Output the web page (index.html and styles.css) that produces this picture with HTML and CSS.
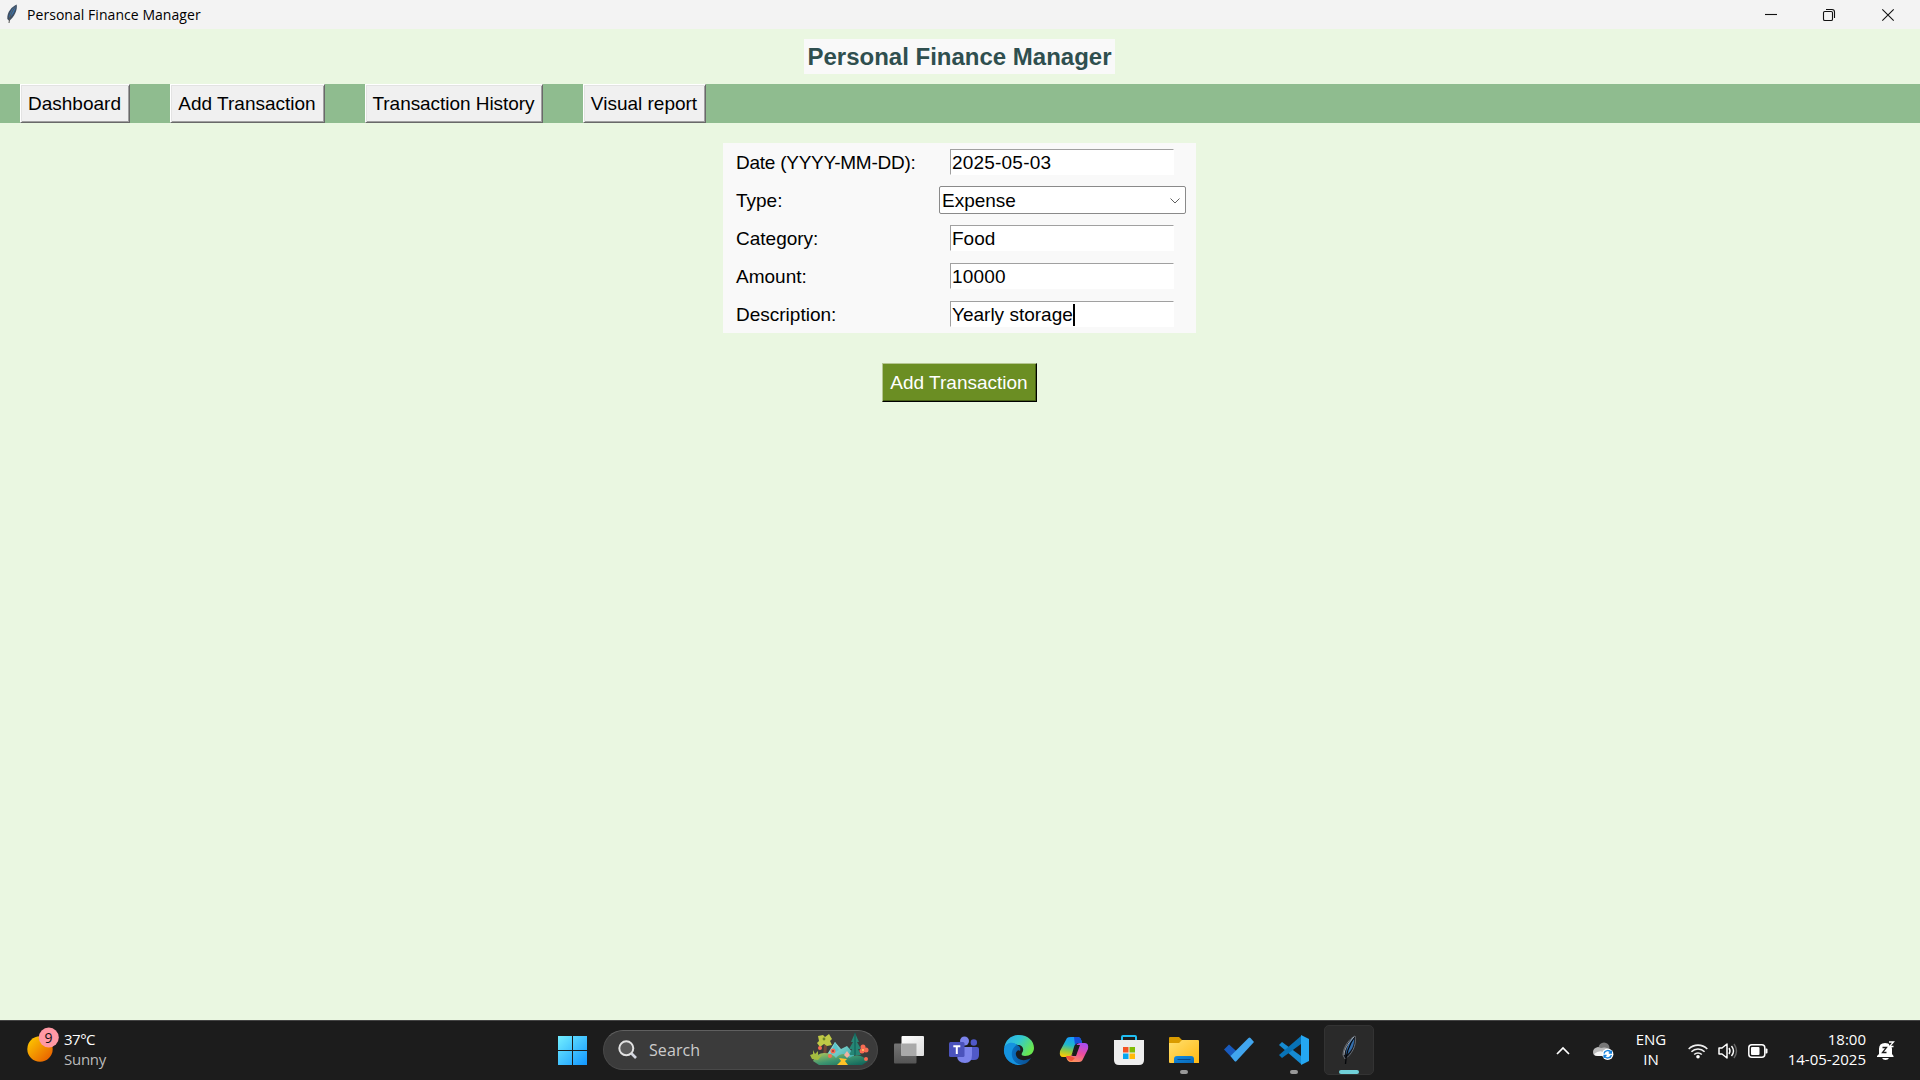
FILE: index.html
```html
<!DOCTYPE html>
<html lang="en">
<head>
<meta charset="utf-8">
<title>Personal Finance Manager</title>
<link rel="stylesheet" href="styles.css">
</head>
<body>
<header class="titlebar">
  <svg class="feather" width="12" height="20" viewBox="0 0 12 20"><path d="M10.6.5C6 2.500.8 8 1.300 15l2 2C8 13 12 6 10.600.5Z" fill="#3d4d62"/><path d="M9.800 2C6 4 3.500 9 3 14 7 11 9.500 6 9.800 2Z" fill="#3973ad"/><path d="M9.500 2.500C6 7 3.500 12 3 19" stroke="#555" fill="none"/></svg>
  <span class="window-title">Personal Finance Manager</span>
  <div class="window-controls">
    <svg width="12" height="12" viewBox="0 0 12 12"><path d="M1 5.500h12" /></svg>
    <svg width="12" height="12" viewBox="0 0 12 12"><rect x=".5" y="2.500" width="9" height="9" rx="1.300"/><path d="M3 .5h6q2.500 0 2.500 2.500v6"/></svg>
    <svg width="12" height="12" viewBox="0 0 12 12"><path d="M.3.3 11.700 11.700M11.700.3.3 11.700"/></svg>
  </div>
</header>
<main class="app">
  <h1 class="heading"><span>Personal Finance Manager</span></h1>
  <nav class="nav">
    <button class="tk-button dashboard">Dashboard</button>
    <button class="tk-button add">Add Transaction</button>
    <button class="tk-button history">Transaction History</button>
    <button class="tk-button report">Visual report</button>
  </nav>
  <form class="form">
    <label class="date-label">Date (YYYY-MM-DD):</label><div class="entry digits"><span>2025-05-03</span></div>
    <label>Type:</label><div class="combo"><span>Expense</span><svg width="10" height="6" viewBox="0 0 10 6"><path d="m.5.5 4.500 4.500L9.500.5"/></svg></div>
    <label>Category:</label><div class="entry"><span>Food</span></div>
    <label>Amount:</label><div class="entry digits"><span>10000</span></div>
    <label>Description:</label><div class="entry"><span>Yearly storage</span><i class="caret"></i></div>
  </form>
  <button class="tk-button add submit">Add Transaction</button>
</main>
<footer class="taskbar">
  <div class="weather">
    <svg width="34" height="36" viewBox="0 0 34 36"><defs><linearGradient id="sun" x1="0" y1="0" x2="1" y2="1"><stop stop-color="#ffd000"/><stop offset="1" stop-color="#e65500"/></linearGradient></defs><circle cx="13" cy="22" r="12.700" fill="url(#sun)"/><circle cx="21.800" cy="10.500" r="10" fill="#ff99a4"/><text x="21.500" y="15.500" text-anchor="middle" class="badge-text">9</text></svg>
    <div class="weather-text"><span class="temp">37°C</span><span class="muted">Sunny</span></div>
  </div>
  <div class="dock">
    <div class="slot"><svg width="30" height="30" viewBox="0 0 30 30"><defs><linearGradient id="win" x1="0" y1="0" x2="1" y2="1"><stop stop-color="#73efff"/><stop offset="1" stop-color="#1196ff"/></linearGradient></defs><path d="M0 1h14v14H0ZM15 1h14v14H15ZM0 16h14v14H0ZM15 16h14v14H15Z" fill="url(#win)"/></svg></div>
    <div class="search">
      <svg width="20" height="20" viewBox="0 0 20 20"><circle cx="8.300" cy="8.300" r="7" fill="#5a5a5a" stroke="#e2e2e2" stroke-width="2"/><path d="m13.500 13.500 4.500 4.500" stroke="#d2d5de" stroke-width="2.600"/></svg>
      <span>Search</span>
      <svg class="forest" width="60" height="34" viewBox="0 0 60 34">
        <defs><linearGradient id="hill" x1="0" y1="0" x2="1" y2="1"><stop stop-color="#b4c95b"/><stop offset=".5" stop-color="#3e9570"/><stop offset="1" stop-color="#096058"/></linearGradient><linearGradient id="mount" x1="0" y1="0" x2="1" y2="1"><stop stop-color="#a8ede5"/><stop offset="1" stop-color="#2b9fa0"/></linearGradient></defs>
        <path d="m16 23 9-14 6 7 6-3 7 8v10H18Z" fill="url(#mount)"/><path d="m20 22 5-13 4 8-5 3Z" fill="#5ac4cb"/>
        <path d="M14 12h3l-1 13h-3Z" fill="#744735"/>
        <path d="m8 3 5-1 2 2 4-3 3 5-2 2 2 4-5 1-3-2-4 3-3-4 2-2Z" fill="#c0ca46"/><circle cx="14" cy="6" r="1.400" fill="#688528"/>
        <path d="m45 0 4 9h-2l4 7h-3l3 6H39l3-6h-3l4-7h-2Z" fill="#268675"/><path d="M45 0v22" stroke="#0d5c57"/>
        <path d="M3 28q4-8 11-8 8 0 12 5 3-4 8-4 4 1 5 4 7-5 14-1l5 4-6 4H9Z" fill="url(#hill)"/>
        <path d="m29 25 8 1-2 2 3 4H27l4-4Z" fill="#ffc328"/>
        <path d="m3 17 2 4 3-3v5l4-1-4 5-6-1-2-4 3-1Z" fill="#a5bc40"/>
        <g fill="#f76c53"><circle cx="10" cy="15" r="2"/><circle cx="23" cy="18" r="2.500"/><circle cx="20" cy="23" r="2"/><circle cx="53" cy="14" r="2.500"/><circle cx="56" cy="17" r="2.500"/><circle cx="52" cy="18" r="2.500"/><circle cx="56" cy="26" r="2"/></g>
        <path d="m37 18 3 4-3 3-3-3Z" fill="#f1b2a1"/><circle cx="23" cy="18" r="1" fill="#9b3638"/><circle cx="53" cy="17" r="1" fill="#ffd164"/>
      </svg>
    </div>
    <div class="slot"><svg width="30" height="30" viewBox="0 0 30 30"><defs><linearGradient id="front" x2="1" y2="1"><stop stop-color="#fff"/><stop offset="1" stop-color="#ddd"/></linearGradient><linearGradient id="back" x2="0" y2="1"><stop stop-color="#747474"/><stop offset="1" stop-color="#555"/></linearGradient></defs><rect y="8.500" width="22.500" height="20" rx="1" fill="url(#back)"/><rect x="7.500" y="1" width="22.500" height="20" rx="1" fill="url(#front)"/><path d="M7.500 8.500h15V21h-15Z" fill="#aaa"/></svg></div>
    <div class="slot"><svg width="30" height="30" viewBox="0 0 30 30"><circle cx="15.500" cy="6" r="4.500" fill="#7b83eb"/><circle cx="24.800" cy="7.500" r="3.200" fill="#5059c9"/><path d="M20 12h8q2 0 2 2v6q0 5-5 5h-5Z" fill="#5059c9"/><path d="M9 12h14v8q0 8-7 8-8 0-8-8Z" fill="#7b83eb"/><rect y="7" width="15.500" height="15" rx="1.500" fill="#4b53bc"/><path d="M4.300 11.300h7M7.800 11v8" stroke="#fff" stroke-width="2"/></svg></div>
    <div class="slot"><svg width="30" height="30" viewBox="0 0 30 30"><defs><linearGradient id="edge-top" x2="1" y2=".5"><stop stop-color="#2baaf0"/><stop offset=".5" stop-color="#31c7d3"/><stop offset="1" stop-color="#69e650"/></linearGradient><linearGradient id="edge-low" x2="1"><stop stop-color="#087cd5"/><stop offset="1" stop-color="#0b4c8b"/></linearGradient></defs><path d="M0 14C1 5 7 0 15 0c9 0 15 6 15 13 0 5-4 8-9 8-3 0-4-1-3-3 3-4 0-8-4-8C7 8 1 9 0 14Z" fill="url(#edge-top)"/><path d="M0 14c1-5 7-7 13-4 3 1 4 4 3 6-2-2-5 1-4 4 1 5 8 7 15 3C24 28 20 30 15 30 7 30 0 24 0 14Z" fill="url(#edge-low)"/><path d="M13 10c-7 3-8 17 4 20C6 31-2 21 .3 13 2 8 9 6 13 10Z" fill="#1593df"/></svg></div>
    <div class="slot"><svg width="30" height="30" viewBox="0 0 30 30"><defs><linearGradient id="cop-a" x1=".5" x2=".3" y2="1"><stop stop-color="#169aff"/><stop offset=".4" stop-color="#20b7ca"/><stop offset=".7" stop-color="#90c943"/><stop offset="1" stop-color="#ffca05"/></linearGradient><linearGradient id="cop-b" x1=".7" x2=".3" y2="1"><stop stop-color="#a84cf2"/><stop offset=".5" stop-color="#ec4c9d"/><stop offset="1" stop-color="#ff9759"/></linearGradient></defs><path d="M8 3q1-1 4-1h7q3 0 4 6h-4q-3 0-4 4l-2 7q-1 3-4 3H4q-4 0-3-6Z" fill="url(#cop-a)"/><path d="M15 2h4q3 0 4 6h-4q-2 0-3 2Z" fill="#174fdc"/><path d="M21 8h5q4 0 3 6l-5 10q-1 3-4 3h-8q-4 0-5-6h3q4 0 5-4l2-6q1-3 4-3Z" fill="url(#cop-b)"/><path d="M7 21h4l5 2-3 3q-4 0-6-5Z" fill="#f35437"/><path d="M17 10h4l-4 11h-4Z" fill="#1c1c1c"/></svg></div>
    <div class="slot"><svg width="30" height="30" viewBox="0 0 30 30"><path d="M8 7V2q0-1 1-1h12q1 0 1 1v5" fill="none" stroke="#20bef2" stroke-width="2"/><path d="M0 5h30v20q0 5-5 5H5q-5 0-5-5Z" fill="#eee"/><path d="M9 12h5.500v5.500H9Z" fill="#f35325"/><path d="M15.500 12H21v5.500h-5.500Z" fill="#81bc06"/><path d="M9 18.500h5.500V24H9Z" fill="#05a6f0"/><path d="M15.500 18.500H21V24h-5.500Z" fill="#ffba08"/></svg></div>
    <div class="slot open"><svg width="30" height="30" viewBox="0 0 30 30"><defs><linearGradient id="folder" x2="1" y2="1"><stop stop-color="#ffe06f"/><stop offset="1" stop-color="#ffb812"/></linearGradient><linearGradient id="label" y2="1"><stop stop-color="#138be0"/><stop offset="1" stop-color="#0868b7"/></linearGradient></defs><path d="M0 3q0-1 1-1h9l3 3h16v8H0Z" fill="#d99b00"/><path d="M0 8h10l3-3h16q1 0 1 1v22H1q-1 0-1-1Z" fill="url(#folder)"/><path d="M5 28v-4q0-3 3-3h14q3 0 3 3v4Z" fill="url(#label)"/><path d="M8.500 24.500h13" stroke="#08498b"/></svg></div>
    <div class="slot"><svg width="30" height="30" viewBox="0 0 30 30"><path d="m0 14.500 5-5 10 9-3.500 8Z" fill="#185abd"/><path d="M6.500 21 24.500 3q1-.8 2 0L30 7 12.500 26q-1 1-2 0Z" fill="#41a5ee"/></svg></div>
    <div class="slot open"><svg width="30" height="30" viewBox="0 0 30 30"><path d="M0 10 3 7 22 21v8Z" fill="#168bd2"/><path d="M0 20 22 1v8L3 23Z" fill="#0873b7"/><path d="m22 0 8 4v22l-8 4Z" fill="#24a7f2"/></svg></div>
    <div class="slot active"><svg width="16" height="30" viewBox="0 0 16 30"><path d="M14 1C9 3 2 12 2 20l2 4C10 20 16 11 14 1Z" fill="#131820" stroke="#8b9199" stroke-width=".7"/><path d="M13 2C9 5 5 12 5 20c5-3 9-10 8-18Z" fill="#346fad"/><path d="M13.500 2C8 10 5 17 4.500 29" stroke="#05070a" fill="none" stroke-width="1.300"/><path d="M13 2Q3 12 3 20" stroke="#d7dce2" fill="none" stroke-width=".7"/></svg></div>
  </div>
  <div class="tray">
    <svg class="chevron" width="14" height="8" viewBox="0 0 14 8"><path d="m1 7 6-6 6 6" fill="none" stroke="#fff" stroke-width="1.700"/></svg>
    <svg class="cloud" width="21" height="18" viewBox="0 0 21 18"><circle cx="11" cy="6" r="5.500" fill="#777"/><path d="M8 6q7-2 9 4l-5 4H4q-4 0-4-4t5-5Z" fill="#bbb"/><path d="M1 12q5-4 9-2v4H5q-3 0-4-2Z" fill="#f4f4f4"/><circle cx="14.700" cy="12.300" r="5.700" fill="#fff"/><path d="M11 11.500a3.800 3.800 0 0 1 7-1m.3-2v2.500h-2.500M18.400 13a3.800 3.800 0 0 1-7 1m-.3 2v-2.500h2.500" fill="none" stroke="#1682dc" stroke-width="1.400"/></svg>
    <div class="lang"><span>ENG</span><span>IN</span></div>
    <svg class="wifi" width="20" height="16" viewBox="0 0 20 16"><g fill="none" stroke="#eee" stroke-width="1.600"><path d="M.7 6a13.200 13.200 0 0 1 18.600 0M3.400 8.800a9.300 9.300 0 0 1 13.200 0M6.200 11.500a5.400 5.400 0 0 1 7.600 0"/></g><circle cx="10" cy="13.700" r="1.800" fill="#fff"/></svg>
    <svg class="speaker" width="20" height="18" viewBox="0 0 20 18"><path d="M1 6h3l5-4v14l-5-4H1Z" fill="none" stroke="#fff" stroke-width="1.500" stroke-linejoin="round"/><path d="M11 6q2 3 0 6M13.500 4q4 5 0 10" fill="none" stroke="#fff" stroke-width="1.400"/><path d="M16 2q5 7 0 14" fill="none" stroke="#666" stroke-width="1.400"/></svg>
    <svg class="battery" width="20" height="14" viewBox="0 0 20 14"><rect x=".8" y=".8" width="16" height="12.400" rx="3" fill="none" stroke="#fff" stroke-width="1.500"/><rect x="3" y="3" width="8.500" height="8" rx="1" fill="#fff"/><path d="M17.500 4.500h1q1 0 1 1v3q0 1-1 1h-1Z" fill="#fff"/></svg>
    <div class="clock"><span>18:00</span><span>14-05-2025</span></div>
    <svg class="bell" width="18" height="19" viewBox="0 0 18 19"><path d="M2 13V8q0-6 6-6 7 0 7 6v5l1.500 2v1H0v-1Z" fill="#fff"/><path d="M5 17h7q-1 2-3.500 2T5 17Z" fill="#fff"/><path d="M10.500 0H17v6h-4.500V4.500Z" fill="#1c1c1c"/><path d="M5.500 6.500h4l-4 5h4" fill="none" stroke="#1c1c1c" stroke-width="1.300"/><path d="M12 1h4.500L12.500 5.500h4" fill="none" stroke="#fff" stroke-width="1.300"/></svg>
  </div>
</footer>
</body>
</html>
```
FILE: styles.css
```css
* { box-sizing: border-box; }
body { margin: 0; width: 1920px; height: 1080px; display: flex; flex-direction: column; overflow: hidden; background: #eaf7e1; color: #000; font: 19px "Liberation Sans", Arial, sans-serif; }
svg { display: block; flex: none; overflow: visible; }
span { white-space: nowrap; }
.titlebar { height: 29px; flex: none; display: flex; align-items: center; padding: 0 16px 0 6px; background: #f3f3f3; font: 14px "Open Sans", sans-serif; }
.feather { margin-top: -2px; }
.window-title { margin-left: 9px; letter-spacing: .05px; }
.window-controls { margin-left: auto; display: flex; gap: 47px; padding-right: 10px; }
.window-controls svg { fill: none; stroke: #111; stroke-width: 1.1; }
.app { flex: 1; display: flex; flex-direction: column; align-items: center; }
.heading { margin: 10px 1px 10px 0; height: 35px; width: 311px; display: flex; justify-content: center; align-items: center; background: #f9f9f9; color: #2f4f4f; font-size: 24px; line-height: 35px; }
.nav { align-self: stretch; height: 39px; display: flex; gap: 40px; padding-left: 20px; background: #8fbc8f; }
.tk-button { height: 39px; margin: 0; padding: 0 1px 0 0; border-radius: 0; border: 1px solid; border-color: #fff #696969 #696969 #fff; background: #f0f0f0; box-shadow: inset 1px 1px #e3e3e3, inset -1px -1px #a0a0a0; color: #000; font: 19px "Liberation Sans", Arial, sans-serif; white-space: nowrap; }
.dashboard { width: 110px; }
.add { width: 155px; }
.history { width: 178px; letter-spacing: -.05px; }
.report { width: 123px; }
.form { margin: 20px 1px 0 0; width: 473px; height: 190px; display: grid; grid-template-columns: 206px 267px; grid-template-rows: repeat(5, 38px); align-items: center; justify-items: center; background: #f9f9f9; }
.form label { justify-self: start; padding: 1px 0 0 13px; }
.form .date-label { letter-spacing: -.25px; }
.entry { width: 224px; height: 26px; margin-right: 1px; display: flex; align-items: center; padding: 1px 0 0 1px; background: #fff; border: 1px solid #fff; border-top-color: #a0a0a0; border-left-color: #a0a0a0; }
.digits { letter-spacing: .2px; }
.combo { width: 247px; height: 28px; display: flex; align-items: center; justify-content: space-between; padding: 1px 5px 0 2px; border: 1px solid #8a8a8a; border-radius: 2px; background: #fff; }
.combo svg { fill: none; stroke: #606060; }
.caret { width: 2px; height: 22px; background: #000; }
.submit { margin: 30px 1px 0 0; background: #6b8e23; color: #fff; border-color: #b5c691 #000 #000 #b5c691; box-shadow: inset -1px -1px #475f17; }
.taskbar { height: 60px; flex: none; display: flex; align-items: center; border-top: 1px solid #444; background: #1c1c1c; color: #fff; font: 15px/20px "Open Sans", sans-serif; }
.weather { width: 548px; display: flex; align-items: center; padding-left: 27px; }
.weather-text { display: flex; flex-direction: column; margin: -4px 0 0 3px; letter-spacing: -.25px; }
.temp { letter-spacing: -.5px; }
.weather svg { margin-top: -11px; }
.badge-text { font: 14px "Open Sans", sans-serif; fill: #111; }
.muted { color: #bbb; }
.dock { display: flex; align-items: center; gap: 5px; margin-top: -1px; }
.slot { width: 50px; height: 50px; display: flex; align-items: center; justify-content: center; position: relative; border-radius: 5px; }
.search { width: 275px; height: 40px; margin-right: 1px; display: flex; align-items: center; padding: 0 7px 0 14px; border: 1px solid #494949; border-top-color: #606060; border-radius: 20px; background: #3b3b3b; color: #ccc; font-size: 16px; }
.search span { margin-left: 11px; letter-spacing: .1px; }
.forest { margin-left: auto; }
.open::after, .active::after { content: ""; position: absolute; bottom: 1px; left: 21px; width: 8px; height: 4px; border-radius: 2px; background: #999; }
.active { background: #2a2a2a; border: 1px solid #333; }
.active::after { left: 14px; bottom: 0; width: 20px; background: #70d0d8; }
.tray { margin-left: auto; display: flex; align-items: center; padding-right: 25px; }
.cloud { margin-left: 23px; }
.lang { width: 32px; margin: -4px 1px 0 21px; display: flex; flex-direction: column; align-items: center; }
.wifi { margin-left: 20px; }
.speaker, .battery { margin-left: 10px; }
.clock { width: 88px; margin: -4px 0 0 10px; display: flex; flex-direction: column; align-items: flex-end; }
.bell { margin-left: 11px; }
```
